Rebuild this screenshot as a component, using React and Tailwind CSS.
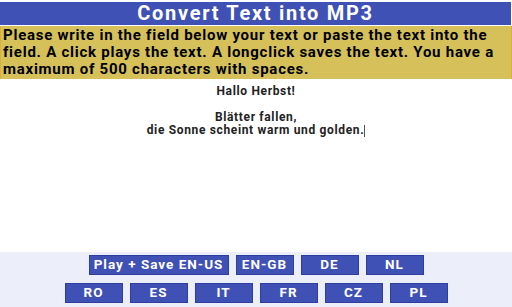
import React from 'react';

const rowOne = ['EN-GB', 'DE', 'NL'];
const rowTwo = ['RO', 'ES', 'IT', 'FR', 'CZ', 'PL'];

function LangButton({ label, wide }) {
  return (
    <button
      className={`h-[20px] ${wide ? 'w-[140px]' : 'w-[58px]'} bg-[#3f51b5] border border-[#2f3e9e] text-white text-[13.5px] font-bold leading-none tracking-[1px] flex items-center justify-center`}
    >
      {label}
    </button>
  );
}

export default function App() {
  return (
    <div className="w-[512px] h-[307px] flex flex-col bg-white font-['Roboto',sans-serif] overflow-hidden">
      <div className="pt-[2px] pr-[1px]">
        <h1 className="h-[23px] bg-[#3f51b5] text-white text-[20px] font-bold leading-[23px] text-center tracking-[1.7px]">
          Convert Text into MP3
        </h1>
      </div>
      <p className="mt-[1px] h-[53px] bg-[#d5c05a] border-x border-[#dcae3a] px-[2px] pt-[1px] text-[15px] font-bold leading-[17px] text-black tracking-[0.75px]">
        Please write in the field below your text or paste the text into the field. A click plays the text. A longclick saves the text. You have a maximum of 500 characters with spaces.
      </p>
      <div className="flex-1 pt-[6px] text-center text-[12px] font-bold leading-[13px] text-[#222] tracking-[0.65px]">
        <div>Hallo Herbst!</div>
        <div>&nbsp;</div>
        <div>Blätter fallen,</div>
        <div>
          die Sonne scheint warm und golden.
          <span className="inline-block w-[1px] h-[12px] bg-[#555] align-middle" />
        </div>
      </div>
      <div className="h-[55px] bg-[#eceef9] flex flex-col items-center pt-[3px] gap-[8px]">
        <div className="flex gap-[7px]">
          <LangButton label="Play + Save EN-US" wide />
          {rowOne.map((l) => (
            <LangButton key={l} label={l} />
          ))}
        </div>
        <div className="flex gap-[7px]">
          {rowTwo.map((l) => (
            <LangButton key={l} label={l} />
          ))}
        </div>
      </div>
    </div>
  );
}
